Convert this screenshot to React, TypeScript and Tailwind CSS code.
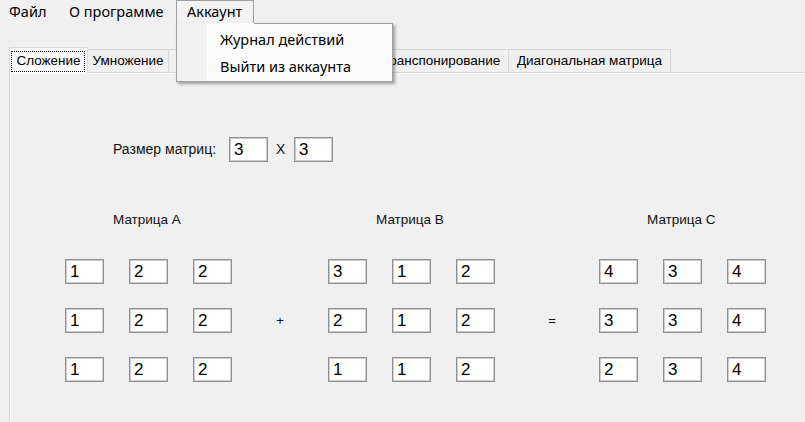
import React from 'react'

const MENU = [
  { label: 'Файл', w: 'w-[58px]', pl: 'pl-[9px]' },
  { label: 'О программе', w: 'w-[118px]', pl: 'pl-[11px]' },
]

// tabs hidden behind the dropdown keep no label: the picture does not show it
const TABS = [
  { label: 'Умножение', w: 'w-[82px]' },
  { label: '', w: 'w-[92px]' },
  { label: '', w: 'w-[115px]' },
  { label: 'Транспонирование', w: 'w-[136px]' },
  { label: 'Диагональная матрица', w: 'w-[163px]' },
]

const A = [
  [1, 2, 2],
  [1, 2, 2],
  [1, 2, 2],
]
const B = [
  [3, 1, 2],
  [2, 1, 2],
  [1, 1, 2],
]
const C = [
  [4, 3, 4],
  [3, 3, 4],
  [2, 3, 4],
]

function Box({ value }: { value: number | string }) {
  return (
    <div className="w-[39px] h-[25px] bg-white border border-[#8f8f8f] shadow-[inset_0_0_0_1px_#cdcdcd] pl-[4px] flex items-center text-[17px] text-black font-['Liberation_Sans',sans-serif] leading-none">
      {value}
    </div>
  )
}

function Matrix({ title, data }: { title: string; data: number[][] }) {
  return (
    <div className="flex flex-col w-[167px]">
      <div className="h-[16px] leading-[16px] pl-[48px] text-[13.5px] text-[#111]">{title}</div>
      <div className="mt-[31px] grid grid-cols-3 gap-x-[25px] gap-y-[24px]">
        {data.flat().map((v, i) => (
          <Box key={i} value={v} />
        ))}
      </div>
    </div>
  )
}

function Operator({ sign, w, pl }: { sign: string; w: string; pl: string }) {
  return (
    <div className={`${w} ${pl} pt-[96px]`}>
      <div className="h-[25px] flex items-center justify-center text-[13px] text-[#111]">{sign}</div>
    </div>
  )
}

export default function App() {
  return (
    <div className="relative w-[805px] h-[422px] overflow-hidden bg-[#f0f0f0] font-['Liberation_Sans',sans-serif]">
      {/* menu strip */}
      <div className="flex h-[23px] font-['Noto_Sans',sans-serif] text-[14.5px] text-black">
        {MENU.map((m) => (
          <div key={m.label} className={`${m.w} ${m.pl} h-[23px] flex items-center`}>
            {m.label}
          </div>
        ))}
        <div className="w-[78px] h-[23px] pl-[10px] flex items-center border-l border-r border-t border-[#a0a0a0] bg-[#f3f3f3]">
          Аккаунт
        </div>
      </div>

      {/* tabs */}
      <div className="mt-[24px] ml-[9px] flex items-end h-[26px] relative z-10 text-[13.5px] text-black">
        <div className="relative w-[79px] h-[26px] bg-[#fcfcfc] border-l border-r border-t border-[#d9d9d9] flex items-center justify-center pt-[2px]">
          <div className="absolute left-[1px] right-[2px] top-[3px] bottom-[1px] border border-dotted border-black" />
          Сложение
        </div>
        {TABS.map((t, i) => (
          <div
            key={i}
            className={`${t.w} h-[23px] mb-[1px] -ml-px bg-[#f0f0f0] border border-b-0 border-[#d9d9d9] flex items-center justify-center whitespace-nowrap overflow-hidden`}
          >
            {t.label}
          </div>
        ))}
      </div>

      {/* tab page */}
      <div className="-mt-px ml-[9px] w-[820px] h-[360px] border-l border-t border-[#d9d9d9] shadow-[inset_1px_1px_0_#fafafa] bg-[#f0f0f0]">
        <div className="pt-[64px] pl-[103px] flex items-center text-[14px] text-[#111]">
          <div className="w-[116px]">Размер матриц:</div>
          <Box value={3} />
          <div className="w-[26px] pl-[8px] text-[14px]">X</div>
          <Box value={3} />
        </div>

        <div className="mt-[50px] pl-[55px] flex items-start">
          <Matrix title="Матрица A" data={A} />
          <Operator sign="+" w="w-[96px]" pl="pl-0" />
          <Matrix title="Матрица B" data={B} />
          <Operator sign="=" w="w-[104px]" pl="pl-[10px]" />
          <Matrix title="Матрица C" data={C} />
        </div>
      </div>

      {/* dropdown of Аккаунт */}
      <div className="absolute left-[176px] top-[23px] w-[217px] h-[59px] z-20 bg-[#fcfcfc] border-l border-r border-b border-[#a0a0a0] shadow-[2px_2px_3px_rgba(0,0,0,0.35)] font-['Noto_Sans',sans-serif] text-[14.5px] text-black">
        <div className="absolute left-[77px] right-0 top-0 h-px bg-[#a0a0a0]" />
        <div className="absolute left-0 top-0 bottom-0 w-[30px] bg-[#f2f2f2]" />
        <div className="relative pt-[3px]">
          <div className="h-[27px] pl-[43px] flex items-center">Журнал действий</div>
          <div className="h-[27px] pl-[43px] flex items-center">Выйти из аккаунта</div>
        </div>
      </div>
    </div>
  )
}
